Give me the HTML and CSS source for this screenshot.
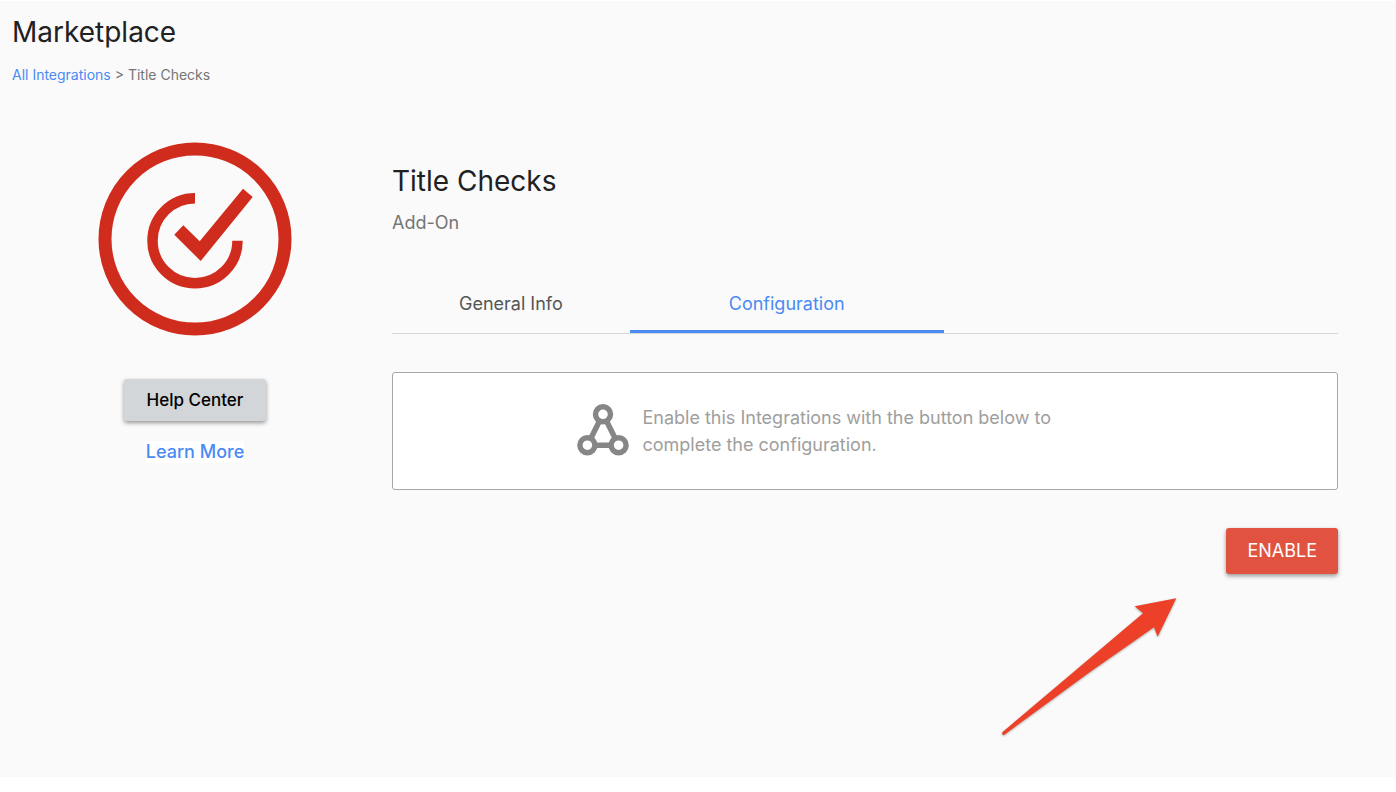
FILE: index.html
```html
<!doctype html>
<html lang="en">
<head>
  <meta charset="utf-8">
  <title>Marketplace - Title Checks</title>
  <link rel="stylesheet" href="styles.css">
</head>
<body>
  <div class="page">
    <header>
      <h1>Marketplace</h1>
      <nav class="breadcrumb"><a href="#">All Integrations</a> &gt; Title Checks</nav>
    </header>

    <div class="columns">
      <aside class="sidebar">
        <svg class="logo" viewBox="0 0 194 194" aria-hidden="true">
          <circle cx="97" cy="97" r="90" fill="none" stroke="#d02c1e" stroke-width="13"/>
          <path d="M97 56.2A42.5 42.5 0 1 0 139.5 98.7" fill="none" stroke="#d02c1e" stroke-width="10.5"/>
          <path d="M85.3 83.3L101.7 99.3L145 46.7L154.7 55L102.7 119L76.3 92.7Z" fill="#d02c1e"/>
        </svg>
        <button type="button" class="button help">Help Center</button>
        <a class="learnMore" href="#">Learn More</a>
      </aside>

      <main>
        <h2>Title Checks</h2>
        <p class="type">Add-On</p>

        <div class="tabs" role="tablist">
          <button type="button" class="tab" role="tab" aria-selected="false">General Info</button>
          <button type="button" class="tab active" role="tab" aria-selected="true">Configuration</button>
        </div>

        <div class="notice">
          <svg class="noticeIcon" viewBox="0 0 52 54" aria-hidden="true">
            <g fill="none" stroke="#868686" stroke-width="5.4">
              <path d="M22.5 17L14 34M29.5 17L38 34M18 41.2H34"/>
              <circle cx="26" cy="10.3" r="7.5"/>
              <circle cx="10.4" cy="41.2" r="7.5"/>
              <circle cx="41.6" cy="41.2" r="7.5"/>
            </g>
          </svg>
          <p>Enable this Integrations with the button below to<br>complete the configuration.</p>
        </div>

        <div class="actions">
          <button type="button" class="button enable">ENABLE</button>
          <svg class="arrow" viewBox="0 0 178 142" aria-hidden="true">
            <path d="M176.3 2.3L134.7 10.3L143 17.3L76.5 73.5L2.3 136.2Q1.5 139.5 4 138.9L90 76L154 31.3L157.7 40.7Z" fill="#ec4128"/>
          </svg>
        </div>
      </main>
    </div>
  </div>
</body>
</html>
```

FILE: styles.css
```css
body {
  margin: 0;
  background: #fff;
  color: #212121;
  font-family: Inter, "Liberation Sans", sans-serif;
}
h1, h2, p {
  margin: 0;
}
h1, h2 {
  font-size: 28px;
  line-height: 36px;
  font-weight: 400;
}
a {
  color: #4a8af4;
  text-decoration: none;
}
button {
  font-family: inherit;
  cursor: pointer;
}
.page {
  margin-top: 1px;
  padding: 13px 58px 39px 12px;
  background: #fafafa;
}
.breadcrumb {
  margin-top: 15px;
  font-size: 14px;
  line-height: 20px;
  color: #757575;
}
.columns {
  display: grid;
  grid-template-columns: 366px 1fr;
  column-gap: 14px;
  margin-top: 57px;
}

/* left side */
.sidebar {
  display: flex;
  flex-direction: column;
  align-items: center;
}
.logo {
  width: 194px;
  height: 194px;
}
.button {
  border: 0;
  border-radius: 3px;
  box-shadow: 0 2px 4px rgba(0, 0, 0, 0.4);
}
.help {
  margin-top: 43px;
  padding: 1px 23px 0;
  background: #d2d6d9;
  color: #000;
  font-size: 17px;
  font-weight: 500;
  line-height: 41px;
}
.learnMore {
  margin-top: 20px;
  background: #fff;
  font-size: 18px;
  font-weight: 500;
  line-height: 22px;
}

/* right side */
main {
  padding-top: 21px;
}
.type {
  margin-top: 12px;
  font-size: 18px;
  line-height: 24px;
  color: #757575;
}
.tabs {
  display: flex;
  margin-top: 38px;
  border-bottom: 1px solid #d5d8d8;
}
.tab {
  padding: 4px 67px 0;
  border: 0;
  border-bottom: 3px solid transparent;
  background: none;
  color: #555;
  font-size: 18px;
  line-height: 53px;
}
.active {
  padding: 4px 99px 0;
  border-color: #4a8af4;
  color: #4a8af4;
}
.notice {
  display: flex;
  align-items: center;
  gap: 13px;
  margin-top: 38px;
  padding: 31px 20px 31px 19.5%;
  border: 1px solid #a5a8a8;
  border-radius: 3px;
  background: #fff;
  color: #9e9e9e;
  font-size: 18px;
  line-height: 27px;
}
.noticeIcon {
  flex: none;
  width: 52px;
  height: 54px;
}
.actions {
  display: flex;
  flex-direction: column;
  align-items: flex-end;
  margin-top: 38px;
}
.enable {
  padding: 0 21px;
  background: #e15241;
  color: #fff;
  font-size: 18px;
  line-height: 46px;
}
.arrow {
  width: 178px;
  height: 142px;
  margin: 22px 160px 0 0;
  filter: drop-shadow(0 1px 1px rgba(0, 0, 0, 0.3));
}
```
